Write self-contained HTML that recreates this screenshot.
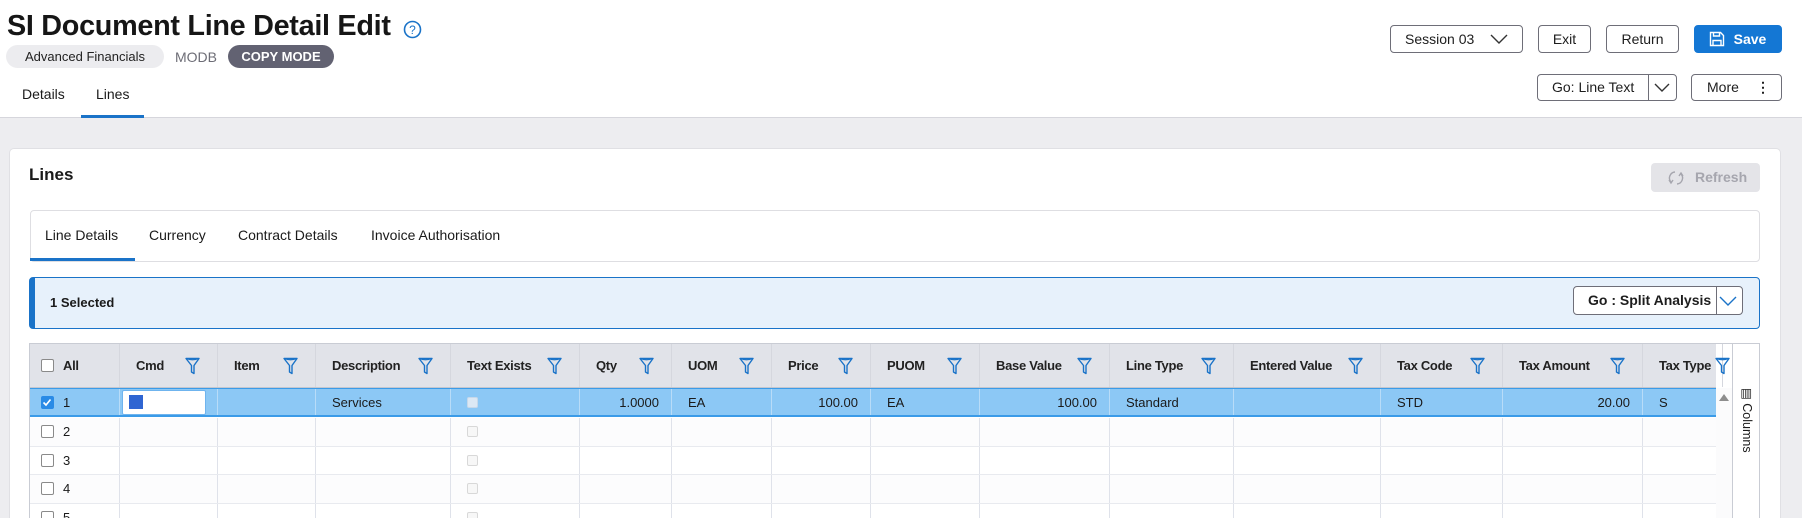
<!DOCTYPE html>
<html style="overflow:hidden;height:518px"><head><meta charset="utf-8">
<style>
*{box-sizing:border-box;margin:0;padding:0}
body{width:1802px;height:518px;overflow:hidden;background:#ededf0;font-family:"Liberation Sans",sans-serif;color:#1a1a1a;position:relative}
.abs{position:absolute;white-space:nowrap}
.hdr{left:0;top:0;width:1802px;height:118px;background:#fff;border-bottom:1px solid #d6d6dc}
.title{left:7px;top:10px;font-size:28.8px;font-weight:bold;letter-spacing:-0.3px;color:#161616}
.pill{height:23px;border-radius:12px;font-size:13px;line-height:23px;text-align:center}
.btn{border:1px solid #6e6e78;border-radius:4px;background:#fff;font-size:14px;text-align:center;color:#1d1d1d;white-space:nowrap}
.panel{left:9px;top:148px;width:1772px;height:370px;background:#fff;border:1px solid #e0e0e4;border-bottom:none;border-radius:5px 5px 0 0}
.grid{left:29px;top:343px;width:1731px;height:175px;border:1px solid #c9ccd4;border-bottom:none;background:#fff;overflow:hidden}
.r{position:absolute;left:0;width:1686px;display:flex}
.r>div{flex:none;position:relative;height:100%;border-right:1px solid #dfe2ea;font-size:13px;padding:0 16px;white-space:nowrap;overflow:visible}
.r>div:nth-child(1){width:90px}.r>div:nth-child(2){width:98px}.r>div:nth-child(3){width:98px}
.r>div:nth-child(4){width:135px}.r>div:nth-child(5){width:129px}.r>div:nth-child(6){width:92px}
.r>div:nth-child(7){width:100px}.r>div:nth-child(8){width:99px}.r>div:nth-child(9){width:109px}
.r>div:nth-child(10){width:130px}.r>div:nth-child(11){width:124px}.r>div:nth-child(12){width:147px}
.r>div:nth-child(13){width:122px}.r>div:nth-child(14){width:140px}.r>div:nth-child(15){width:80px}
.h{top:0;height:44px;background:#e1e3e9;border-bottom:1px solid #c4c7cf}
.h>div{line-height:44px;font-weight:bold;letter-spacing:-0.3px;color:#222;border-right-color:#d5d7de}
.h .f{position:absolute;top:13px;right:17px;width:15px;height:18px}
.d{height:28.5px;border-bottom:1px solid #e8eaef}
.d>div{line-height:28px}
.sel{background:#8cc8f5;border-top:1px solid #3b9be8;border-bottom:2px solid #3b9be8}
.sel>div{border-right-color:#b8dcf8}
.rt{text-align:right;padding-right:12px!important}
.cb{position:absolute;left:11px;top:7px;width:13px;height:13px;border:1.5px solid #8a8a8a;border-radius:2px;background:#fff}
.n{position:absolute;left:33px}
.tcb{position:absolute;left:16px;top:8px;width:11px;height:11px;border:1px solid #d8d8d8;border-radius:2px;background:#f7f7f7}
.alt{background:#fcfcfd}
</style></head><body>
<svg width="0" height="0" style="position:absolute"><defs><symbol id="fu" viewBox="0 0 15 18"><path d="M1 1.5 H14 L9 8.5 V16.5 L6.5 15 V8.5 Z" fill="none" stroke="#1a73c8" stroke-width="1.4" stroke-linejoin="round"/><path d="M1 1.5 Q7.5 4 14 1.5" fill="none" stroke="#1a73c8" stroke-width="1.2"/></symbol></defs></svg>
<div class="abs hdr"></div>
<div class="abs title">SI Document Line Detail Edit</div>
<svg class="abs" style="left:403px;top:20px" width="19" height="19" viewBox="0 0 19 19"><circle cx="9.5" cy="9.5" r="8" fill="none" stroke="#1a73c8" stroke-width="1.6"/><text x="9.5" y="14" text-anchor="middle" font-size="12" font-family="Liberation Sans" fill="#1a73c8">?</text></svg>
<div class="abs pill" style="left:6px;top:45px;width:158px;background:#ececef;color:#222">Advanced Financials</div>
<div class="abs" style="left:175px;top:49px;font-size:14px;color:#6d6d76">MODB</div>
<div class="abs pill" style="left:228px;top:45px;width:106px;background:#626272;color:#fff;font-weight:bold">COPY MODE</div>
<div class="abs" style="left:22px;top:86px;font-size:14px">Details</div>
<div class="abs" style="left:96px;top:86px;font-size:14px">Lines</div>
<div class="abs" style="left:81px;top:115px;width:63px;height:3px;background:#1a73c8"></div>

<div class="abs btn" style="left:1390px;top:25px;width:133px;height:28px;line-height:26px;text-align:left;padding-left:14px">Session 03<svg style="position:absolute;right:14px;top:8px" width="18" height="10" viewBox="0 0 18 10"><path d="M1 1 L9 9 L17 1" fill="none" stroke="#333" stroke-width="1.4"/></svg></div>
<div class="abs btn" style="left:1538px;top:25px;width:53px;height:28px;line-height:26px">Exit</div>
<div class="abs btn" style="left:1606px;top:25px;width:73px;height:28px;line-height:26px">Return</div>
<div class="abs btn" style="left:1694px;top:25px;width:88px;height:28px;line-height:26px;background:#1477d4;border-color:#1477d4;color:#fff;padding-left:24px;font-weight:bold">Save<svg style="position:absolute;left:14px;top:5px" width="16" height="16" viewBox="0 0 16 16"><path d="M1.5 1.5 H11.5 L14.5 4.5 V14.5 H1.5 Z" fill="none" stroke="#fff" stroke-width="1.4"/><path d="M4.5 1.5 V5 H10.5 V1.5 M4 14.5 V9.5 H12 V14.5" fill="none" stroke="#fff" stroke-width="1.4"/></svg></div>
<div class="abs btn" style="left:1537px;top:74px;width:140px;height:27px;line-height:25px;text-align:left;padding-left:14px">Go: Line Text<div style="position:absolute;left:110px;top:0;width:1px;height:25px;background:#6e6e78"></div><svg style="position:absolute;right:6px;top:8px" width="16" height="10" viewBox="0 0 16 10"><path d="M1 1 L8 8 L15 1" fill="none" stroke="#333" stroke-width="1.4"/></svg></div>
<div class="abs btn" style="left:1691px;top:74px;width:91px;height:27px;line-height:25px;text-align:left;padding-left:15px">More<span style="position:absolute;left:64px;top:0;font-weight:bold">&#8942;</span></div>

<div class="abs panel"></div>
<div class="abs" style="left:29px;top:165px;font-size:17px;font-weight:bold">Lines</div>
<div class="abs" style="left:1651px;top:163px;width:109px;height:29px;background:#e4e4e8;border-radius:4px;font-size:14px;font-weight:bold;color:#a6a6ae;line-height:29px;padding-left:44px">Refresh<svg style="position:absolute;left:16px;top:6px" width="18" height="18" viewBox="0 0 18 18"><path d="M4 13 A6 6 0 0 1 8 3 M14 5 A6 6 0 0 1 10 15" fill="none" stroke="#a6a6ae" stroke-width="1.4"/><path d="M2 11 L4 14 L6 11 M12 7 L14 4 L16 7" fill="none" stroke="#a6a6ae" stroke-width="1.4"/></svg></div>

<div class="abs" style="left:30px;top:210px;width:1730px;height:52px;border:1px solid #dedee2;border-radius:4px;background:#fff"></div>
<div class="abs" style="left:45px;top:227px;font-size:14px">Line Details</div>
<div class="abs" style="left:149px;top:227px;font-size:14px">Currency</div>
<div class="abs" style="left:238px;top:227px;font-size:14px">Contract Details</div>
<div class="abs" style="left:371px;top:227px;font-size:14px">Invoice Authorisation</div>
<div class="abs" style="left:30px;top:258px;width:105px;height:3px;background:#1a73c8"></div>

<div class="abs" style="left:29px;top:277px;width:1731px;height:52px;background:#e7f1fb;border:1px solid #1a73c8;border-left:6px solid #1a73c8;border-radius:4px"></div>
<div class="abs" style="left:50px;top:295px;font-size:13px;font-weight:bold">1 Selected</div>
<div class="abs btn" style="left:1573px;top:286px;width:170px;height:29px;line-height:27px;text-align:left;padding-left:14px;font-weight:bold">Go : Split Analysis<div style="position:absolute;left:142px;top:0;width:1px;height:27px;background:#6e6e78"></div><svg style="position:absolute;right:5px;top:9px" width="18" height="10" viewBox="0 0 18 10"><path d="M1 1 L9 9 L17 1" fill="none" stroke="#1a73c8" stroke-width="1.4"/></svg></div>

<div class="abs grid">
 <div class="r h">
  <div style="padding:0"><div class="cb" style="top:15px"></div><span class="n">All</span></div>
  <div>Cmd<svg class="f"><use href="#fu"/></svg></div>
  <div>Item<svg class="f"><use href="#fu"/></svg></div>
  <div>Description<svg class="f"><use href="#fu"/></svg></div>
  <div>Text Exists<svg class="f"><use href="#fu"/></svg></div>
  <div>Qty<svg class="f"><use href="#fu"/></svg></div>
  <div>UOM<svg class="f"><use href="#fu"/></svg></div>
  <div>Price<svg class="f"><use href="#fu"/></svg></div>
  <div>PUOM<svg class="f"><use href="#fu"/></svg></div>
  <div>Base Value<svg class="f"><use href="#fu"/></svg></div>
  <div>Line Type<svg class="f"><use href="#fu"/></svg></div>
  <div>Entered Value<svg class="f"><use href="#fu"/></svg></div>
  <div>Tax Code<svg class="f"><use href="#fu"/></svg></div>
  <div>Tax Amount<svg class="f"><use href="#fu"/></svg></div>
  <div>Tax Type<svg class="f" style="right:-8px"><use href="#fu"/></svg></div>
 </div>
 <div class="r d sel" style="top:44px">
  <div style="padding:0"><div class="cb" style="background:#2a8be6;border-color:#2a8be6"><svg width="11" height="11" viewBox="0 0 11 11" style="position:absolute;left:0;top:0"><path d="M1.5 5.5 L4 8 L8.5 2.5" fill="none" stroke="#fff" stroke-width="1.6"/></svg></div><span class="n">1</span></div>
  <div style="padding:0"><div style="position:absolute;left:2px;top:1px;width:84px;height:25px;background:#fff;border:1px solid #6fb4ee;border-radius:2px"><div style="position:absolute;left:6px;top:4px;width:14px;height:14px;background:#2f65d2"></div></div></div>
  <div></div>
  <div>Services</div>
  <div><div class="tcb" style="background:#dbe8f4;border-color:#c6d8ea"></div></div>
  <div class="rt">1.0000</div>
  <div>EA</div>
  <div class="rt">100.00</div>
  <div>EA</div>
  <div class="rt">100.00</div>
  <div>Standard</div>
  <div></div>
  <div>STD</div>
  <div class="rt">20.00</div>
  <div>S</div>
 </div>
 <div class="r d alt" style="top:74px"><div style="padding:0"><div class="cb"></div><span class="n">2</span></div><div></div><div></div><div></div><div><div class="tcb"></div></div><div></div><div></div><div></div><div></div><div></div><div></div><div></div><div></div><div></div><div></div></div>
 <div class="r d" style="top:102.5px"><div style="padding:0"><div class="cb"></div><span class="n">3</span></div><div></div><div></div><div></div><div><div class="tcb"></div></div><div></div><div></div><div></div><div></div><div></div><div></div><div></div><div></div><div></div><div></div></div>
 <div class="r d alt" style="top:131px"><div style="padding:0"><div class="cb"></div><span class="n">4</span></div><div></div><div></div><div></div><div><div class="tcb"></div></div><div></div><div></div><div></div><div></div><div></div><div></div><div></div><div></div><div></div><div></div></div>
 <div class="r d" style="top:159.5px"><div style="padding:0"><div class="cb"></div><span class="n">5</span></div><div></div><div></div><div></div><div><div class="tcb"></div></div><div></div><div></div><div></div><div></div><div></div><div></div><div></div><div></div><div></div><div></div></div>
 <div style="position:absolute;left:1686px;top:44px;width:16px;height:140px;background:#fbfbfc"></div>
 <svg style="position:absolute;left:1689px;top:50px" width="10" height="7" viewBox="0 0 10 7"><path d="M0 7 L5 0 L10 7Z" fill="#8d8d8d"/></svg>
 <div style="position:absolute;left:1702px;top:0;width:1px;height:180px;background:#c9ccd4"></div>
 <div style="position:absolute;left:1704px;top:0;width:27px;height:180px;background:#fff"></div>
 <div style="position:absolute;left:1707px;top:44px;transform:rotate(90deg);transform-origin:10px 10px;font-size:12.5px;white-space:nowrap;line-height:20px">&#9636; Columns</div>
</div>
</body></html>
